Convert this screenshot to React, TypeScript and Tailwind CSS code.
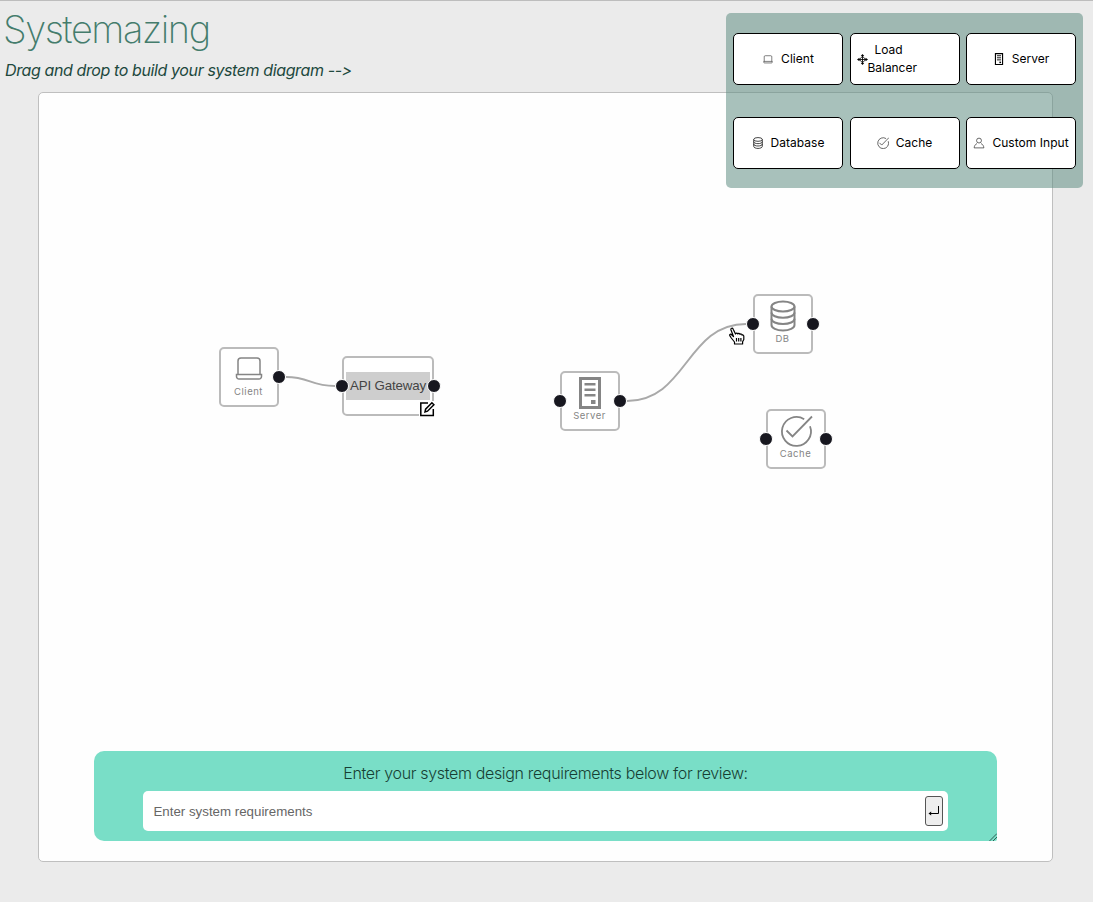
import React from "react";

type IconName = "laptop" | "server" | "database" | "check" | "user" | "move";

function Icon({ name, className, weight = 1 }: { name: IconName; className: string; weight?: number }) {
  return (
    <svg viewBox="0 0 32 32" fill="none" stroke="currentColor" strokeWidth={weight} className={className}>
      {name === "laptop" && (
        <>
          <path d="M5 21.500V8a3 3 0 0 1 3-3h16a3 3 0 0 1 3 3v13.500" />
          <path d="M3.500 21.500h25v2a2.500 2.500 0 0 1-2.500 2.500H6a2.500 2.500 0 0 1-2.500-2.500z" />
        </>
      )}
      {name === "server" && (
        <>
          <path d="M6.500 1.500h19v29h-19z" strokeWidth={3} />
          <path d="M10.500 7.300h11M10.500 12.800h11M10.500 18.300h11" strokeWidth={2.400} />
          <path d="M17 23h4.500v4H17z" fill="currentColor" stroke="none" />
        </>
      )}
      {name === "database" && (
        <>
          <ellipse cx="16" cy="6.500" rx="11.500" ry="5" />
          <path d="M4.500 6.500v18.500c0 3 5 5.500 11.500 5.500s11.500-2.500 11.500-5.500V6.500" />
          <path d="M4.500 12.500c0 3 5 5.200 11.500 5.200s11.500-2.200 11.500-5.200M4.500 18.800c0 3 5 5.200 11.500 5.200s11.500-2.200 11.500-5.200" />
        </>
      )}
      {name === "check" && (
        <>
          <path d="M24.200 4.200A14.500 14.500 0 1 0 30 11.300" />
          <path d="M6.500 15.500l6 6L32 1.500" />
        </>
      )}
      {name === "user" && (
        <>
          <circle cx="16" cy="9.500" r="6.500" />
          <path d="M10.500 17.500C6 19.500 3.500 24 3 29h26c-.5-5-3-9.500-7.500-11.500" />
        </>
      )}
      {name === "move" && (
        <>
          <path d="M16 4v24M4 16h24M11 11l5-4 5 4 4 5-4 5-5 4-5-4-4-5z" />
          <path d="M16 0l5 6H11zM16 32l5-6H11zM0 16l7-5v10zM32 16l-7-5v10z" fill="currentColor" stroke="none" />
        </>
      )}
    </svg>
  );
}

function PaletteButton({ icon, label, weight = 1.8 }: { icon: IconName; label: string; weight?: number }) {
  return (
    <button className="flex h-[52px] w-[110px] items-center justify-center gap-[7px] rounded-[5px] border border-black bg-white text-[12px] leading-[18px] tracking-[0.04px] whitespace-nowrap text-black">
      <Icon
        name={icon}
        weight={weight}
        className={icon === "laptop" ? "mt-px h-[11px] w-3 shrink-0 text-[#333]" : icon === "server" ? "size-3 shrink-0" : "size-3 shrink-0 text-[#222]"}
      />
      {label}
    </button>
  );
}

function Handle({ className }: { className: string }) {
  return <span className={`absolute size-[14px] rounded-full border border-white bg-[#17171f] ${className}`} />;
}

function DiagramNode({ icon, label, className, weight = 1.5, input = true }: { icon: IconName; label: string; className: string; weight?: number; input?: boolean }) {
  return (
    <div className={`absolute flex h-[60px] w-[60px] flex-col items-center rounded-[5px] border-2 border-[#bbb] bg-white pt-1 text-[#858585] ${className}`}>
      <Icon name={icon} weight={weight} className="-ml-px size-8 shrink-0 overflow-visible" />
      <span className="mt-px -ml-px text-[9.500px] leading-3 tracking-[0.5px]">{label}</span>
      {input && <Handle className="top-[21px] -left-[9.500px]" />}
      <Handle className="top-[21px] -right-[8.500px]" />
    </div>
  );
}

export default function App() {
  return (
    <div className="relative flex h-[902px] w-[1093px] flex-col overflow-hidden border-t border-[#bdbdbd] bg-[#ebebeb] font-['Inter',sans-serif]">
      <header className="h-[91px] shrink-0 pl-[5px]">
        <h1 className="-ml-[2px] pt-1 text-[38px] leading-[48px] font-extralight tracking-[-1.450px] text-[#447c6c]">Systemazing</h1>
        <p className="mt-[5px] text-[16px] leading-6 tracking-[-0.390px] text-[#21483d] italic">Drag and drop to build your system diagram --&gt;</p>
      </header>

      <main className="relative ml-[38px] flex h-[770px] w-[1015px] shrink-0 flex-col items-center justify-end rounded-[5px] border border-[#bfbfbf] bg-[#fefefe] pb-5">
        <svg className="absolute top-0 left-0 h-full w-full" viewBox="39 93 1013 768" fill="none" stroke="#a9a9a9" strokeWidth="2">
          <path d="M286 377C310 377 310 386 335 386" />
          <path d="M627 401C687 401 686 324 746 324" />
        </svg>

        <DiagramNode icon="laptop" label="Client" input={false} className="top-[254px] left-[180px]" />
        <div className="absolute top-[263px] left-[303px] flex h-[60px] w-[92px] items-center justify-center rounded-[5px] border-2 border-[#bbb] bg-white">
          <span className="flex h-7 w-[84px] shrink-0 items-center justify-center bg-[#cecece] font-['Liberation_Sans',sans-serif] text-[13.300px] tracking-[-0.150px] whitespace-nowrap text-[#444]">API Gateway</span>
          <Handle className="top-[21px] -left-[9px]" />
          <Handle className="top-[21px] -right-[9px]" />
          <svg viewBox="0 0 16 16" fill="none" stroke="black" strokeWidth="1.500" className="absolute -right-[3px] -bottom-[3px] size-4 bg-white">
            <path d="M9 2H1.800v12.500h12.500V8M6 11l.6-2.800 6.300-6.500 2 2-6.400 6.500z" />
          </svg>
        </div>
        <DiagramNode icon="server" label="Server" className="top-[278px] left-[521px]" />
        <DiagramNode icon="database" label="DB" weight={2} className="top-[201px] left-[714px]" />
        <DiagramNode icon="check" label="Cache" weight={1.8} className="top-[316px] left-[727px]" />

        <svg viewBox="0 0 16 18" fill="white" stroke="black" strokeWidth="1.200" strokeLinejoin="round" className="absolute top-[234px] left-[690px] h-[18px] w-4">
          <path d="M5.500 17v-2L2.300 11 .8 8.600c-.5-1.300 1-1.800 1.800-.9L4.500 9.500 2 3c-.5-1.900 1.500-2.400 2.200-.8L6.500 7c.1-1.200 1.800-1.300 2.300 0 .3-1 1.900-.8 2.200.4.500-.8 1.900-.5 2.100.7 1-.5 1.700.2 1.700 1.200v3.200l-1.200 2.300V17z" />
          <path d="M7.500 11v3.500M9.700 11v3.500M11.900 11v3.500" />
        </svg>

        <section className="relative flex h-[90px] w-[903px] flex-col items-center rounded-[10px] rounded-br-[2px] bg-[#79dec7] pt-[10px]">
          <h2 className="text-[16px] leading-6 font-light tracking-[-0.340px] text-[#173f34]">Enter your system design requirements below for review:</h2>
          <div className="mt-[6px] flex h-10 w-[805px] items-center justify-between rounded-[5px] bg-white pr-[5px] pl-[10.500px] font-['Liberation_Sans',sans-serif] text-[13.300px] text-[#666]">
            <span className="pt-px">Enter system requirements</span>
            <button className="flex h-[30px] w-[18px] items-center justify-center rounded-[3px] border border-[#555] bg-[#ededed] text-black">
              <svg viewBox="0 0 12 12" className="size-3 shrink-0" fill="none" stroke="currentColor">
                <path d="M10.500 1v7.500H2" />
                <path d="M0.500 8.500L3.200 6.500v4z" fill="currentColor" stroke="none" />
              </svg>
            </button>
          </div>
          <svg viewBox="0 0 8 8" className="absolute right-0 bottom-0 size-2" stroke="#315e54" strokeWidth="1">
            <path d="M0.500 8L8 .5M4 8L8 4" />
          </svg>
        </section>
      </main>

      <aside className="absolute top-3 left-[726px] grid h-[175px] w-[357px] grid-cols-[110px_110px_110px] content-start gap-x-[6.500px] gap-y-8 rounded-[5px] bg-[rgba(97,142,131,0.55)] px-[7px] pt-5">
        <PaletteButton icon="laptop" label="Client" />
        <button className="flex h-[52px] w-[110px] items-center justify-start rounded-[5px] border border-black bg-white pl-[6px] text-left text-[12px] leading-[18px] tracking-[-0.040px] text-black">
          <Icon name="move" weight={2.5} className="size-[11px] shrink-0" />
          <span className="indent-[7px]">Load<br />Balancer</span>
        </button>
        <PaletteButton icon="server" label="Server" />
        <PaletteButton icon="database" label="Database" weight={2.2} />
        <PaletteButton icon="check" label="Cache" />
        <PaletteButton icon="user" label="Custom Input" />
      </aside>
    </div>
  );
}
